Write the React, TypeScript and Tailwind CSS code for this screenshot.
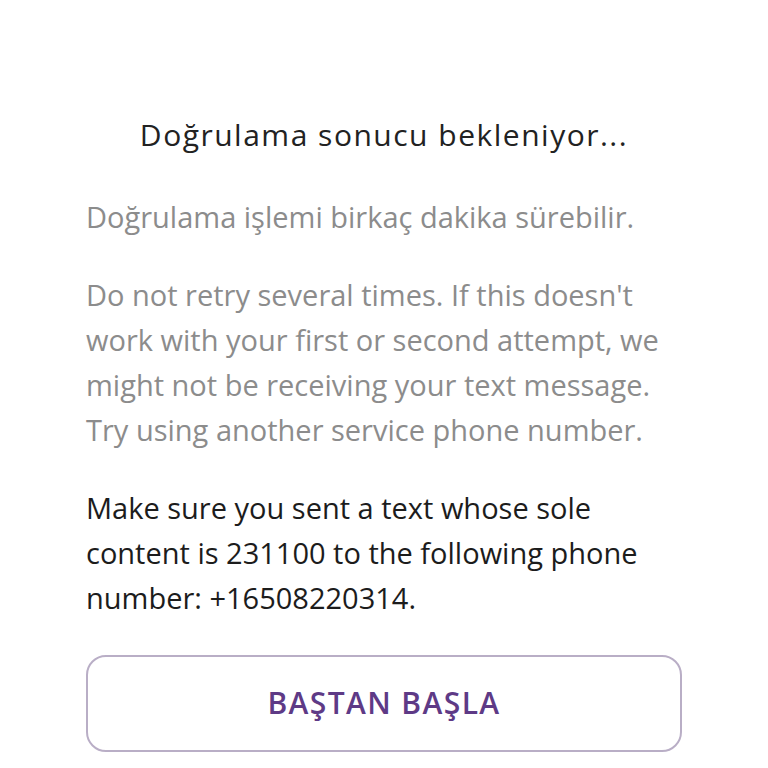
import React from 'react';

const App: React.FC = () => {
  return (
    <div className="min-h-screen bg-white px-[86px] pt-[113px] text-[29px] leading-[44.7px]" style={{ fontFamily: '"Open Sans", "Noto Sans", sans-serif' }}>
      <h1 className="text-center text-[30px] tracking-[1.5px] text-[#222222] font-normal whitespace-nowrap">Doğrulama sonucu bekleniyor...</h1>

      <p className="mt-[37px] text-[#8c8c8c] whitespace-nowrap">Doğrulama işlemi birkaç dakika sürebilir.</p>

      <p className="mt-[34px] text-[#8c8c8c] whitespace-nowrap">
        Do not retry several times. If this doesn't
        <br />
        work with your first or second attempt, we
        <br />
        might not be receiving your text message.
        <br />
        Try using another service phone number.
      </p>

      <p className="mt-[34px] text-[#1c1c1c] whitespace-nowrap">
        Make sure you sent a text whose sole
        <br />
        content is 231100 to the following phone
        <br />
        number: +16508220314.
      </p>

      <button className="mt-[35px] w-full h-[97px] rounded-[20px] border-2 border-[#b9aec6] bg-white text-[30px] tracking-[1.4px] font-semibold text-[#5e3a86]">
        BAŞTAN BAŞLA
      </button>
    </div>
  );
};

export default App;
